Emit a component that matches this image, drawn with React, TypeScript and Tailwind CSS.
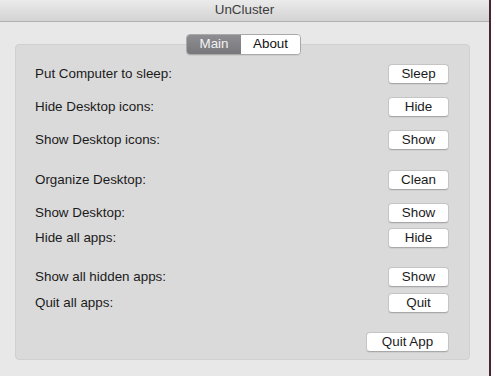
const rows = [
  { label: 'Put Computer to sleep:', action: 'Sleep', mt: 'mt-0' },
  { label: 'Hide Desktop icons:', action: 'Hide', mt: 'mt-[13px]' },
  { label: 'Show Desktop icons:', action: 'Show', mt: 'mt-[13px]' },
  { label: 'Organize Desktop:', action: 'Clean', mt: 'mt-[20px]' },
  { label: 'Show Desktop:', action: 'Show', mt: 'mt-[13px]' },
  { label: 'Hide all apps:', action: 'Hide', mt: 'mt-[5px]' },
  { label: 'Show all hidden apps:', action: 'Show', mt: 'mt-[19px]' },
  { label: 'Quit all apps:', action: 'Quit', mt: 'mt-[6px]' },
];

function MacButton({ children, wide }: { children: string; wide?: boolean }) {
  return (
    <button
      className={`${wide ? 'w-[83px]' : 'w-[61px]'} h-[20px] rounded-[4px] bg-white border border-[#c4c4c4] border-b-[#a8a8a8] shadow-[0_1px_0_rgba(0,0,0,0.05)] text-[13.4px] leading-none text-[#1a1a1a] flex items-center justify-center`}
    >
      {children}
    </button>
  );
}

export default function App() {
  return (
    <div className="w-[491px] h-[376px] flex bg-[#4a2433] font-['Liberation_Sans',Arial,sans-serif] overflow-hidden">
      <div className="w-[489px] h-full flex flex-col bg-[#e8e8e8]">
        {/* Title bar */}
        <div className="h-[22px] shrink-0 flex items-center justify-center bg-gradient-to-b from-[#ebebeb] to-[#d3d3d3] border-b border-[#b1b1b1]">
          <span className="text-[13.4px] text-[#3c3c3c]">UnCluster</span>
        </div>

        {/* Tabs */}
        <div className="relative mt-[12px] ml-[15px] mr-[19px] h-[326px]">
          <div className="absolute left-[171px] top-0 z-10 flex h-[21px] rounded-[4px] border border-[#a9a9a9] overflow-hidden shadow-[0_1px_0_rgba(0,0,0,0.06)] text-[13.4px]">
            <div className="w-[54px] flex items-center justify-center bg-gradient-to-b from-[#8d8d92] to-[#77777c] text-[#f2f2f2]">
              Main
            </div>
            <div className="w-[59px] flex items-center justify-center bg-white text-[#111]">
              About
            </div>
          </div>

          {/* Group box */}
          <div className="absolute inset-x-0 top-[10px] bottom-0 rounded-[4px] bg-[#dadada] border border-[#d0d0d0] pt-[19px] pl-[19px] pr-[20px] flex flex-col">
            {rows.map((r) => (
              <div key={r.label} className={`${r.mt} h-[20px] flex items-center justify-between`}>
                <span className="text-[13.4px] text-[#1a1a1a]">{r.label}</span>
                <MacButton>{r.action}</MacButton>
              </div>
            ))}
            <div className="mt-[19px] flex justify-end">
              <MacButton wide>Quit App</MacButton>
            </div>
          </div>
        </div>
      </div>
    </div>
  );
}
